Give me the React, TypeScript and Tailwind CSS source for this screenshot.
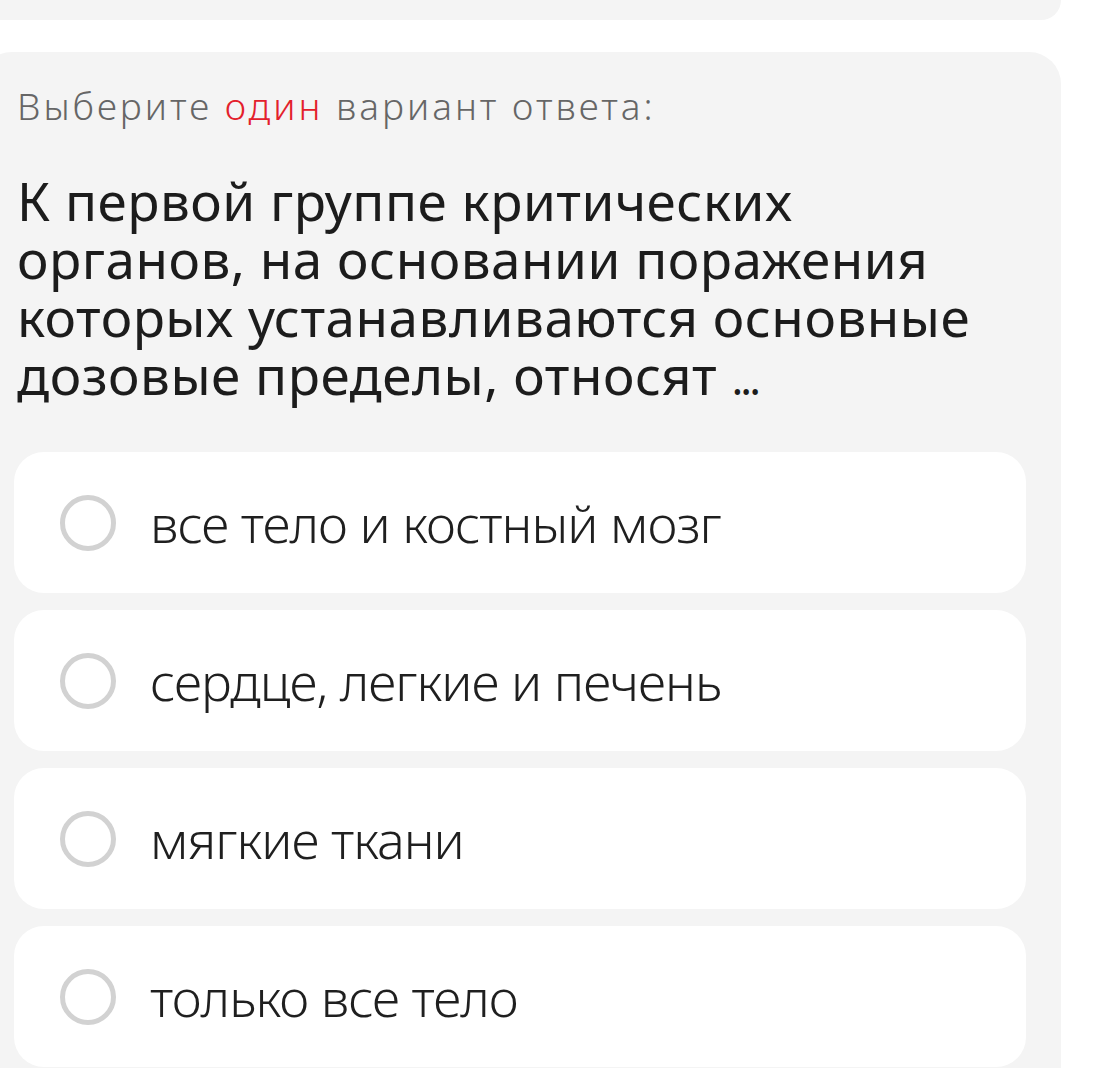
import React from "react";

const options = [
  "все тело и костный мозг",
  "сердце, легкие и печень",
  "мягкие ткани",
  "только все тело",
];

const sans = { fontFamily: "'Noto Sans', 'Open Sans', sans-serif" };

function Radio() {
  return (
    <span className="block h-[56px] w-[56px] shrink-0 rounded-full border-[5px] border-[#d2d2d2] bg-white" />
  );
}

export default function App() {
  return (
    <div className="h-[1068px] w-[1093px] overflow-hidden bg-white" style={sans}>
      {/* tail of the previous question card */}
      <div className="ml-[-20px] mr-[32px] h-[20px] rounded-b-[32px] bg-[#f4f4f4]" />

      <div className="ml-[-20px] mr-[32px] mt-[32px] rounded-[32px] bg-[#f4f4f4] pb-[40px] pl-[34px] pr-[35px] pt-[31px]">
        <p className="whitespace-nowrap pl-[3px] text-[37px] font-light leading-[46px] tracking-[3px] text-[#666666]">
          Выберите <span className="text-[#e3202b]">один</span> вариант ответа:
        </p>

        <h2 className="mt-[43px] whitespace-nowrap pl-[3px] text-[53px] font-normal leading-[58px] tracking-[0.5px] text-[#1c1c1c]">
          К первой группе критических
          <br />
          органов, на основании поражения
          <br />
          которых устанавливаются основные
          <br />
          дозовые пределы, относят{" "}
          <span className="text-[44px] leading-none tracking-[-3px]">...</span>
        </h2>

        <div className="mt-[48px] flex flex-col gap-[17px]">
          {options.map((o) => (
            <div
              key={o}
              className="flex h-[141px] items-center gap-[34px] rounded-[30px] bg-white pl-[46px]"
            >
              <Radio />
              <span className="text-[52px] font-light leading-none tracking-[-1px] text-[#1f1f1f]">
                {o}
              </span>
            </div>
          ))}
        </div>
      </div>
    </div>
  );
}
